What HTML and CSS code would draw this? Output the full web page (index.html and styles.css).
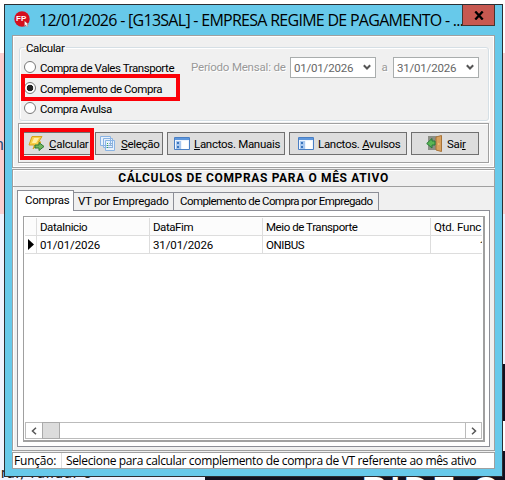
FILE: index.html
```
<!DOCTYPE html>
<html lang="pt-BR">
<head>
<meta charset="utf-8">
<title>12/01/2026 - [G13SAL]</title>
<link rel="stylesheet" href="styles.css">
</head>
<body>
<div class="behind" aria-hidden="true">
  <div class="pink"></div>
  <div class="dark-side"></div>
  <div class="dark-bottom"></div>
  <span class="frag frag-n">n</span>
  <span class="frag frag-left">rar, validar e</span>
  <span class="frag frag-right">RIDE O</span>
</div>
<div class="window">
  <header class="titlebar">
    <svg class="app" width="17" height="17" viewBox="0 0 17 17"><circle cx="8" cy="8" r="7.7" fill="#d50f1e"/><text x="2" y="10" class="fp">FP</text><path d="M10.500 10v5l1.300-1.100 1.200 2 1-.6-1.100-1.900h1.700z" fill="#fff" stroke="#a55" stroke-width=".4"/></svg>
    <h1>12/01/2026 - [G13SAL] - EMPRESA REGIME DE PAGAMENTO - ...</h1>
    <button class="close"><svg width="10" height="9" viewBox="0 0 10 9"><path d="M1.300.5 8.700 8.500M8.700.5 1.300 8.500" stroke="#000" stroke-width="2.300"/></svg></button>
  </header>
  <main class="client">
    <section class="top-panel">
      <fieldset class="group">
        <legend>Calcular</legend>
        <div class="radios">
          <label><i class="radio"></i><span class="r1">Compra de Vales Transporte</span></label>
          <label><i class="radio on"></i><span class="r2">Complemento de Compra</span></label>
          <label><i class="radio"></i><span class="r3">Compra Avulsa</span></label>
        </div>
        <div class="period">
          <span class="plabel">Período Mensal: de</span>
          <div class="combo"><span>01/01/2026</span><svg width="8" height="7" viewBox="0 0 8 7"><path d="M.8 1.200 4 4.500 7.200 1.200" fill="none" stroke="#555" stroke-width="2"/></svg></div>
          <span class="to">a</span>
          <div class="combo"><span>31/01/2026</span><svg width="8" height="7" viewBox="0 0 8 7"><path d="M.8 1.200 4 4.500 7.200 1.200" fill="none" stroke="#555" stroke-width="2"/></svg></div>
        </div>
        <div class="mark mark-radio"></div>
      </fieldset>
      <div class="toolbar">
        <button class="btn b1"><svg width="17" height="17" viewBox="0 0 17 17"><path d="M4 1.500h10L10.500 7H13l-8 7 1.500-4H1z" fill="#f8cf48" stroke="#d7a319"/><path d="M6 3h5L8 8H4z" fill="#fff0a5"/><path d="M7 10h4V7.500l5 4-5 4V13H7z" fill="#70b45e" stroke="#2d7a36"/></svg><span><u>C</u>alcular</span></button>
        <button class="btn b2"><svg width="17" height="17" viewBox="0 0 17 17"><g fill="#e8f1fc" stroke="#8ab4e4"><path d="M.5 1.500h10v9H.5zM3.500 3.500h9v9h-9zM5.500 5.500h9v10h-9z"/></g><path d="M7 8.500h1M7 10.500h1M7 12.500h1" stroke="#3da94d"/><path d="M9 8.500h4M9 10.500h4M9 12.500h4" stroke="#8db1da"/></svg><span><u>S</u>eleção</span></button>
        <button class="btn b3"><svg width="16" height="15" viewBox="0 0 16 15"><path d="M.5 1.500h15v12H.5z" fill="#eff5fe" stroke="#4a7fc4"/><path d="M1 2h14v2H1z" fill="#5e97dc"/><path d="M2 5h5v8H2z" fill="#a9c8ef"/><path d="M3 6h2v2H3zM3 10h2v2H3z" fill="#3c75bd"/><path d="M8 5h6v8H8z" fill="#fff"/></svg><span><u>L</u>anctos. Manuais</span></button>
        <button class="btn b4"><svg width="16" height="15" viewBox="0 0 16 15"><path d="M.5 1.500h15v12H.5z" fill="#eff5fe" stroke="#4a7fc4"/><path d="M1 2h14v2H1z" fill="#5e97dc"/><path d="M2 5h5v8H2z" fill="#a9c8ef"/><path d="M3 6h2v2H3zM3 10h2v2H3z" fill="#3c75bd"/><path d="M8 5h6v8H8z" fill="#fff"/></svg><span>Lanctos. <u>A</u>vulsos</span></button>
        <button class="btn b5"><svg width="17" height="17" viewBox="0 0 17 17"><path d="M2 1h9v14H2z" fill="#8c8f86"/><path d="m10 2 5.500-1.500v16L10 15z" fill="#d9a260" stroke="#a87337"/><path d="M12 9h1.500" stroke="#ffe08a"/><path d="M9 6H6V3.500L.7 8.500 6 13v-3h3z" fill="#5ab554" stroke="#287939"/></svg><span>Sai<u>r</u></span></button>
        <div class="mark mark-button"></div>
      </div>
    </section>
    <section class="bottom-panel">
      <h2><span>CÁLCULOS DE COMPRAS PARA O MÊS ATIVO</span></h2>
      <nav class="tabs">
        <span class="tab active">Compras</span><span class="tab t2">VT por Empregado</span><span class="tab t3">Complemento de Compra por Empregado</span>
      </nav>
      <div class="page">
        <div class="grid">
          <div class="row head"><b></b><b>DataInicio</b><b>DataFim</b><b>Meio de Transporte</b><b>Qtd. Func</b></div>
          <div class="row"><b><svg width="6" height="11" viewBox="0 0 6 11"><path d="M0 0 6 5.500 0 11z"/></svg></b><b class="date">01/01/2026</b><b class="date">31/01/2026</b><b>ONIBUS</b><b class="num"><span>1</span></b></div>
          <div class="blank"></div>
          <div class="scroll">
            <span class="arrow"><svg width="6" height="8" viewBox="0 0 6 8"><path d="M5 .8 1.500 4 5 7.200" fill="none" stroke="#555" stroke-width="1.500"/></svg></span>
            <span class="thumb"></span>
            <span class="arrow end"><svg width="6" height="8" viewBox="0 0 6 8"><path d="M1 .8 4.500 4 1 7.200" fill="none" stroke="#555" stroke-width="1.500"/></svg></span>
          </div>
        </div>
      </div>
    </section>
    <footer class="status"><span class="fn">Função:</span><span class="msg">Selecione para calcular complemento de compra de VT referente ao mês ativo</span></footer>
  </main>
</div>
</body>
</html>
```
FILE: styles.css
```
* { box-sizing: border-box; }
body { margin: 0; width: 505px; height: 480px; overflow: hidden; position: relative; background: #fff; font: 11.5px/16px Roboto, sans-serif; letter-spacing: -.43px; color: #000; padding: 4px; }
h1, h2, b { font-weight: 400; margin: 0; white-space: nowrap; }
svg { flex: none; display: block; }
.behind { position: absolute; inset: 0; overflow: hidden; background: linear-gradient(#fff 213px, #f0f3ff 213px); letter-spacing: 0; }
.pink { position: absolute; top: 53px; left: 0; right: 0; height: 161px; background: #fbd0d1; }
.dark-side { position: absolute; left: 503px; top: 364px; width: 2px; height: 116px; background: linear-gradient(#11101f 57px, #fff 57px 87px, #11101f 87px); }
.dark-bottom { position: absolute; left: 205px; right: 0; top: 476px; height: 4px; background: #11101f; }
.frag { position: absolute; white-space: nowrap; }
.frag-n { left: -5px; top: 135px; font: 16px/20px Roboto, sans-serif; color: #244f7a; }
.frag-left { left: 1px; top: 465px; font: 15px/16px Roboto, sans-serif; letter-spacing: .8px; color: #222; }
.frag-right { left: 362px; top: 471px; font: 700 34px/34px "Liberation Sans", sans-serif; letter-spacing: 4px; color: #fff; }
.window { position: relative; width: 499px; height: 473px; border: 1px solid #2b2f34; background: #67c9ea; padding: 0 7px 7px; }
.titlebar { height: 30px; display: flex; align-items: flex-start; }
.app { margin: 6px 0 0 2px; }
.fp { font: 700 8px "Liberation Sans", sans-serif; letter-spacing: 0; fill: #fff; }
.titlebar h1 { font: 16px/22px "Open Sans", sans-serif; margin: 4px 0 0 8px; width: 424px; letter-spacing: -.72px; }
.close { width: 34px; height: 21px; border: 1px solid #48342f; border-top: 0; background: #c75850; margin: 0 0 0 -1px; padding: 0; display: flex; align-items: center; justify-content: center; }
.client { height: 434px; width: 483px; background: #f0f0f0; display: flex; flex-direction: column; }
.top-panel { height: 133px; border: 1px solid #a0a0a0; box-shadow: inset 1px 1px #fff, inset -1px -1px #fff; padding: 11px 6px 0 5px; }
.group { position: relative; margin: 0 0 0 1px; padding: 0; height: 74px; width: 470px; border: 1px solid #d5dfe5; border-radius: 3px; box-shadow: inset 1px 1px #fff, 1px 1px #fff; display: flex; min-width: 0; }
legend { padding: 0 2px; margin-left: 4px; height: 1px; line-height: 2px; background: #f0f0f0; }
.radios { padding-top: 12px; width: 166px; margin-left: 4px; }
.radios label { height: 20.500px; display: flex; gap: 4px; white-space: nowrap; }
.radio { width: 12px; height: 12px; border: 1px solid #777; border-radius: 50%; background: #fff; margin-top: 1px; flex: none; }
.radio.on { background: radial-gradient(circle, #222 3px, #fff 3.600px); }
.period { display: flex; height: 21px; margin: 9px 0 0 1px; color: #999; white-space: nowrap; }
.period > span { line-height: 21px; text-shadow: 1px 1px #fff; }
.plabel { width: 99px; letter-spacing: -.2px; }
.combo { width: 86px; height: 21px; border: 1px solid #a9adad; background: #fff; display: flex; align-items: center; justify-content: space-between; padding: 0 4px 0 3px; color: #666; letter-spacing: -.2px; }
.to { width: 17px; text-align: center; }
.mark { position: absolute; border: 4px solid #fc0008; }
.mark-radio { left: 1px; top: 26px; width: 159px; height: 27px; }
.toolbar { position: relative; margin-top: 2px; height: 40px; width: 471px; border: 1px solid #a0a0a0; box-shadow: inset 1px 1px #fff, 1px 1px #fff; padding: 8px 0 0 4px; display: flex; gap: 4px; }
.btn { font: inherit; letter-spacing: -.3px; color: #000; height: 23px; padding: 0 0 0 4px; border: 1px solid #707070; background: #ddd; display: flex; align-items: center; gap: 4px; white-space: nowrap; }
.b1 { width: 68px; }
.b2 { width: 68px; }
.b3 { width: 118px; padding-left: 6px; }
.b4 { width: 118px; padding-left: 8px; }
.b5 { width: 68px; padding-left: 14px; }
.mark-button { left: 1px; top: 4px; width: 74px; height: 32px; }
.bottom-panel { margin-top: 1px; height: 282px; border: 1px solid #a0a0a0; box-shadow: inset 1px 1px #fff; }
h2 { font: 700 12px/16px Roboto, sans-serif; letter-spacing: .65px; height: 17px; border-bottom: 1px solid #a0a0a0; text-align: center; }
.tabs { display: flex; align-items: flex-end; height: 23px; padding-left: 4px; }
.tab { height: 18px; border: 1px solid #8c8e96; border-left: 0; border-bottom: 0; padding-left: 4px; white-space: nowrap; letter-spacing: -.3px; }
.tab.active { position: relative; z-index: 1; width: 57px; height: 21px; margin-bottom: -1px; border-left: 1px solid #8c8e96; background: #fff; padding: 1px 0 0 7px; }
.t2 { width: 100px; }
.t3 { width: 205px; padding-left: 6px; letter-spacing: -.57px; }
.page { margin-left: 4px; width: 473px; height: 237px; border: 1px solid #8c8e96; background: #fff; padding: 5px; }
.grid { width: 462px; height: 226px; border: 1px solid #a0a0a0; border-right-width: 2px; border-bottom-width: 2px; padding: 1px; display: flex; flex-direction: column; }
.row { display: grid; grid-template-columns: 12px 113px 113px 168px 51px; height: 18px; }
.row b { border-right: 1px solid #ddd; border-bottom: 1px solid #ddd; padding-left: 3px; overflow: hidden; line-height: 18px; }
.row b:last-child { border-right: 0; letter-spacing: -.2px; }
.row svg { margin: 3px 0 0 0; }
.row .date { letter-spacing: -.1px; }
.row .num { text-align: right; }
.num span { margin-right: -4px; }
.head b { background: #fcfcfc; }
.blank { flex: 1; }
.scroll { height: 17px; border: 1px solid #bbb; display: flex; }
.arrow { width: 16px; display: flex; align-items: center; justify-content: center; }
.thumb { width: 18px; margin: -1px 0; border: 1px solid #aaa; background: #dcdcdc; }
.end { margin-left: auto; border-left: 1px solid #bbb; }
.status { height: 17px; margin-top: 1px; border: 1px solid #a0a0a0; background: #fff; display: flex; font: 12px/16px "Open Sans", sans-serif; letter-spacing: -.35px; white-space: nowrap; }
.fn { width: 49px; border-right: 1px solid #ddd; padding-left: 1px; letter-spacing: -.2px; }
.msg { padding-left: 4px; }
```
